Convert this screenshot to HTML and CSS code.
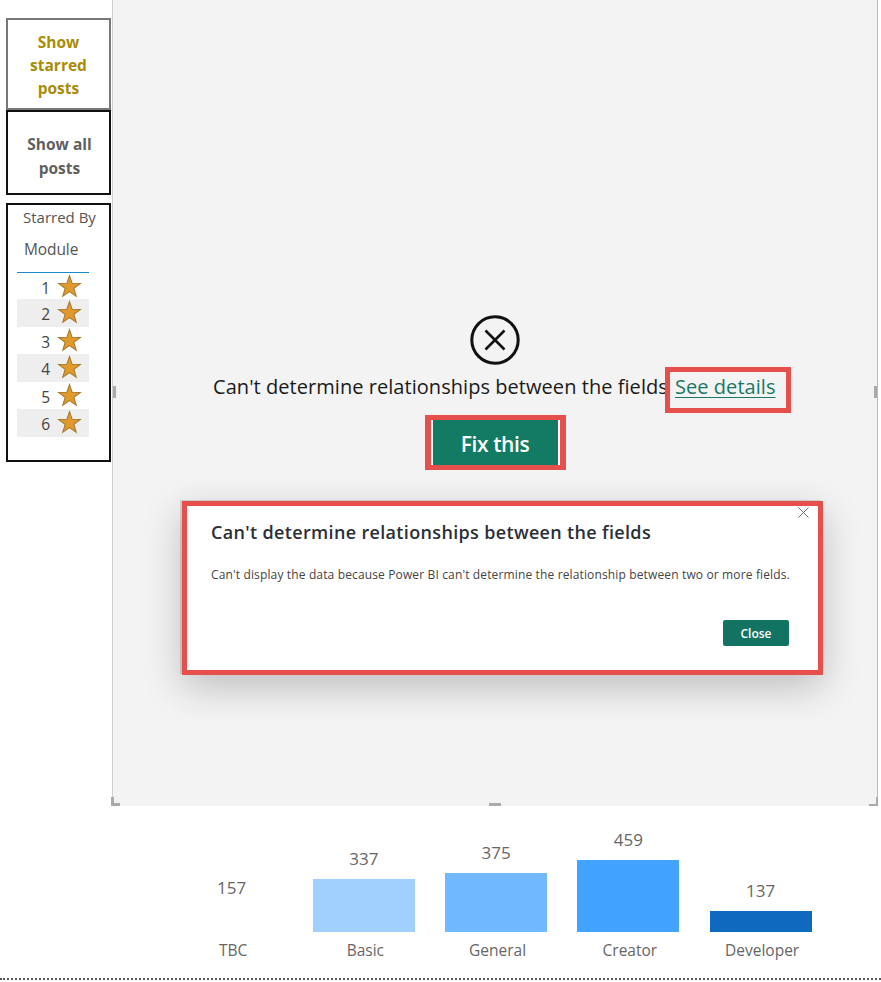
FILE: index.html
```html
<!DOCTYPE html>
<html lang="en">
<head>
<meta charset="utf-8">
<title>Can't determine relationships</title>
<link rel="stylesheet" href="styles.css">
</head>
<body>
<div class="page">
  <div class="top">
    <aside class="side">
      <div class="btn-card starred">Show starred posts</div>
      <div class="btn-card all">Show all posts</div>
      <div class="slicer">
        <div class="slicer-title"><div class="t1">Starred By</div><div class="t2">Module</div></div>
        <div class="rows">
          <div class="row"><span>1</span><svg class="star" viewBox="0 0 24 24"><path d="M12 1.500L14.590 8.940 22.460 9.100 16.180 13.860 18.470 21.400 12 16.900 5.530 21.400 7.820 13.860 1.540 9.100 9.410 8.940z"/></svg></div>
          <div class="row"><span>2</span><svg class="star" viewBox="0 0 24 24"><path d="M12 1.500L14.590 8.940 22.460 9.100 16.180 13.860 18.470 21.400 12 16.900 5.530 21.400 7.820 13.860 1.540 9.100 9.410 8.940z"/></svg></div>
          <div class="row"><span>3</span><svg class="star" viewBox="0 0 24 24"><path d="M12 1.500L14.590 8.940 22.460 9.100 16.180 13.860 18.470 21.400 12 16.900 5.530 21.400 7.820 13.860 1.540 9.100 9.410 8.940z"/></svg></div>
          <div class="row"><span>4</span><svg class="star" viewBox="0 0 24 24"><path d="M12 1.500L14.590 8.940 22.460 9.100 16.180 13.860 18.470 21.400 12 16.900 5.530 21.400 7.820 13.860 1.540 9.100 9.410 8.940z"/></svg></div>
          <div class="row"><span>5</span><svg class="star" viewBox="0 0 24 24"><path d="M12 1.500L14.590 8.940 22.460 9.100 16.180 13.860 18.470 21.400 12 16.900 5.530 21.400 7.820 13.860 1.540 9.100 9.410 8.940z"/></svg></div>
          <div class="row"><span>6</span><svg class="star" viewBox="0 0 24 24"><path d="M12 1.500L14.590 8.940 22.460 9.100 16.180 13.860 18.470 21.400 12 16.900 5.530 21.400 7.820 13.860 1.540 9.100 9.410 8.940z"/></svg></div>
        </div>
      </div>
    </aside>
    <main class="canvas">
      <svg class="err-icon" viewBox="0 0 50 50"><circle cx="25" cy="25" r="23.200"/><path d="M15.500 15.500l19 19M34.500 15.500l-19 19"/></svg>
      <div class="msg">
        <span class="msg-text">Can't determine relationships between the fields</span>
        <a class="see" href="#">See details</a>
      </div>
      <div class="fix-box"><button class="fix">Fix this</button></div>

      <section class="dialog">
        <svg class="dlg-x" viewBox="0 0 12 12"><path d="M.5.500l11 11M11.500.500l-11 11"/></svg>
        <h2>Can't determine relationships between the fields</h2>
        <p>Can't display the data because Power BI can't determine the relationship between two or more fields.</p>
        <div class="dlg-actions"><button class="close">Close</button></div>
      </section>

      <i class="grip grip-l"></i>
      <i class="grip grip-r"></i>
      <i class="grip grip-b"></i>
      <i class="corner corner-l"></i>
      <i class="corner corner-r"></i>
    </main>
  </div>
  <div class="chart">
    <div class="col"><div class="val">157</div><div class="bar b0"></div><div class="lab">TBC</div></div>
    <div class="col"><div class="val">337</div><div class="bar b1"></div><div class="lab">Basic</div></div>
    <div class="col"><div class="val">375</div><div class="bar b2"></div><div class="lab">General</div></div>
    <div class="col"><div class="val">459</div><div class="bar b3"></div><div class="lab">Creator</div></div>
    <div class="col"><div class="val">137</div><div class="bar b4"></div><div class="lab">Developer</div></div>
  </div>
  <div class="dots"></div>
</div>
</body>
</html>
```

FILE: styles.css
```css
* { box-sizing: border-box; }
html, body { margin: 0; padding: 0; background: #fff; }
body { font-family: "Open Sans", "Noto Sans", sans-serif; }
.page { width: 881px; height: 982px; overflow: hidden; background: #fff; }
.top { display: flex; height: 806px; }

.side { width: 112px; flex: none; padding: 18px 0 0 6px; display: flex; flex-direction: column; }
.btn-card { width: 105px; display: flex; align-items: center; justify-content: center; text-align: center; font-weight: 700; font-size: 15.500px; line-height: 23px; background: #fff; }
.starred { height: 92px; border: 2px solid #777; color: #a98c08; padding: 3px 16px 0; }
.all { height: 85px; border: 2px solid #111; color: #5f5f5f; padding: 7px 14px 0 16px; line-height: 24px; }
.slicer { width: 105px; height: 259px; margin-top: 8px; border: 2px solid #111; padding: 0 0 0 9px; }
.slicer-title { font-size: 15px; color: #555; height: 67px; white-space: nowrap; }
.t1 { line-height: 24px; padding-left: 6px; }
.t2 { line-height: 40px; padding-left: 7px; font-size: 15.500px; letter-spacing: -.1px; }
.rows { width: 72px; border-top: 1px solid #1f86d0; }
.row { height: 27.500px; display: flex; align-items: center; justify-content: flex-end; font-size: 15.500px; color: #444; gap: 7px; padding: 0 7px 0 0; }
.row:first-child { height: 26px; }
.row span { padding-top: 3px; }
.row:nth-child(even) { background: #eeeeee; }
.star { width: 25px; height: 25px; flex: none; }
.star path { fill: #e09a2c; stroke: #a8782c; stroke-width: 1; stroke-linejoin: miter; }

.canvas { position: relative; width: 766px; flex: none; background: #f3f3f3; border-left: 1px solid #cfcfcf; border-right: 1px solid #b9b9b9; display: flex; flex-direction: column; align-items: center; padding-top: 315px; }
.err-icon { width: 50px; height: 50px; flex: none; }
.err-icon circle { fill: none; stroke: #111; stroke-width: 3; }
.err-icon path { fill: none; stroke: #111; stroke-width: 2.600; }
.msg { height: 46px; margin-top: 2px; display: flex; align-items: center; font-size: 20px; white-space: nowrap; color: #1a1a1a; width: 100%; padding-left: 100px; }
.msg-text { width: 452px; flex: none; letter-spacing: .05px; padding-bottom: 8px; }
.see { flex: none; width: 126px; height: 46px; border: 5px solid #e5504d; color: #1a7765; display: flex; align-items: center; justify-content: flex-start; padding: 0 0 8px 5px; font-size: 20px; letter-spacing: .05px; text-decoration: underline; text-decoration-thickness: 1px; text-underline-offset: 3px; }
.fix-box { width: 141px; height: 55px; margin-top: 2px; border: 5px solid #e5504d; border-left-width: 6px; border-right-width: 6px; background: #fff; }
.fix { width: 100%; height: 100%; border: 0; border-left: 2px solid #fff; border-right: 2px solid #fff; background: #137a63; color: #fff; font: 600 21px "Open Sans", sans-serif; letter-spacing: -.4px; padding: 2px 0 0; }

.dialog { position: absolute; left: 69px; top: 501px; width: 641px; height: 174px; background: #fff; border: 5px solid #e5504d; box-shadow: 0 12px 36px rgba(0,0,0,.22), -2px -1px 0 #d5d5d5; padding: 14px 29px 0 24px; }
.dlg-x { position: absolute; right: 9px; top: 1px; width: 11px; height: 11px; }
.dlg-x path { fill: none; stroke: #666; stroke-width: 1; }
.dialog h2 { margin: 0; font-size: 18px; font-weight: 600; line-height: 24px; color: #2b2f36; letter-spacing: .34px; white-space: nowrap; }
.dialog p { margin: 23px 0 0; font-size: 12px; line-height: 16px; color: #444; letter-spacing: .14px; white-space: nowrap; }
.dlg-actions { display: flex; justify-content: flex-end; margin-top: 37px; }
.close { width: 66px; height: 26px; border: 0; border-radius: 2px; background: #137362; color: #fff; font: 600 12px "Open Sans", sans-serif; padding: 0; }

.grip { position: absolute; background: #aaa; }
.grip-l { left: 0; top: 386px; width: 3px; height: 12px; }
.grip-r { right: 0; top: 386px; width: 3px; height: 12px; }
.grip-b { left: 376px; bottom: 0; width: 12px; height: 3px; }
.corner { position: absolute; bottom: 0; width: 9px; height: 9px; }
.corner-l { left: -2px; border-left: 3px solid #aaa; border-bottom: 3px solid #aaa; }
.corner-r { right: -1px; border-right: 2px solid #aaa; border-bottom: 2px solid #aaa; }

.chart { display: flex; height: 166px; padding-left: 165.500px; }
.col { width: 132.250px; display: flex; flex-direction: column; justify-content: flex-end; align-items: center; height: 160px; }
.val { font-size: 17px; line-height: 20px; color: #666; margin-bottom: 10px; }
.bar { width: 102px; }
.b0 { height: 24px; background: #fff; }
.b1 { height: 53px; background: #a1d0ff; }
.b2 { height: 59px; background: #70b8ff; }
.b3 { height: 72px; background: #41a2ff; }
.b4 { height: 21px; background: #0f69bd; }
.lab { font-size: 15.500px; line-height: 20px; color: #666; margin-top: 8px; height: 26px; padding-left: 3px; white-space: nowrap; }
.dots { height: 0; border-top: 2px dotted #555; margin-top: 6px; }
```
